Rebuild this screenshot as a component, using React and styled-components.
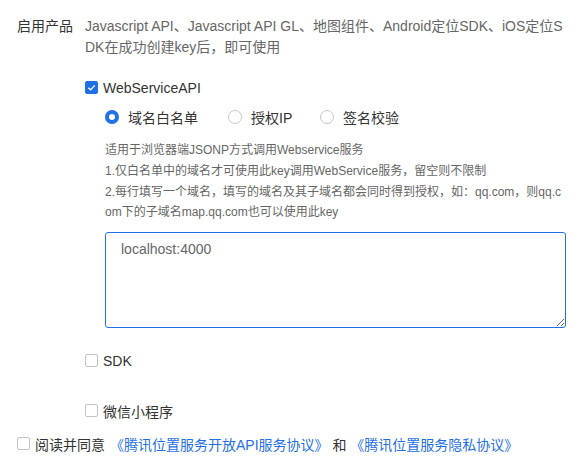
import React, { useState } from 'react'
import styled, { createGlobalStyle, css } from 'styled-components'

const BLUE = '#1f6fe5'

const GlobalStyle = createGlobalStyle`
  body {
    margin: 0;
    background: #fff;
    font-family: "Liberation Sans", "Noto Sans CJK SC", sans-serif;
    color: #333;
  }
`

const Page = styled.div`
  width: 587px;
  padding: 16px 0 0 17px;
  box-sizing: border-box;
`

const FormRow = styled.div`
  display: grid;
  grid-template-columns: 68px 482px;
`

const Label = styled.div`
  font-size: 14px;
  line-height: 21px;
  color: #333;
`

const Content = styled.div`
  display: flex;
  flex-direction: column;
`

const Desc = styled.p`
  margin: 0;
  font-size: 14px;
  line-height: 21px;
  color: #666;
  word-break: break-all;
`

const CheckRow = styled.label`
  display: flex;
  align-items: center;
  gap: 5px;
  height: 21px;
  font-size: 14px;
  color: #333;
  margin-top: ${p => p.$top || 0}px;
  cursor: pointer;
`

const Box = styled.span`
  width: 13px;
  height: 13px;
  box-sizing: border-box;
  border-radius: 2px;
  display: inline-flex;
  align-items: center;
  justify-content: center;
  flex-shrink: 0;
  ${p => p.$checked ? css`
    background: ${BLUE};
    border: 1px solid ${BLUE};
  ` : css`
    background: #fff;
    border: 1px solid #c4c4c4;
  `}
`

const Sub = styled.div`
  padding-left: 20px;
  display: flex;
  flex-direction: column;
`

const RadioGroup = styled.div`
  display: flex;
  align-items: center;
  height: 21px;
  margin-top: 8px;
`

const RadioItem = styled.label`
  display: flex;
  align-items: center;
  gap: 9px;
  font-size: 14px;
  color: #333;
  width: ${p => p.$w}px;
  cursor: pointer;
`

const RadioDot = styled.span`
  width: 14px;
  height: 14px;
  box-sizing: border-box;
  border-radius: 50%;
  flex-shrink: 0;
  background: #fff;
  border: ${p => p.$on ? `4px solid ${BLUE}` : '1px solid #c8c8c8'};
`

const Notes = styled.div`
  margin-top: 13px;
  width: 461px;
  font-size: 12px;
  line-height: 20px;
  color: #666;
  p {
    margin: 0 0 1px;
    word-break: break-all;
  }
`

const Area = styled.textarea`
  margin-top: 9px;
  width: 461px;
  height: 96px;
  box-sizing: border-box;
  border: 1px solid ${BLUE};
  border-radius: 3px;
  padding: 7px 15px;
  font-family: "Liberation Sans", "Noto Sans CJK SC", sans-serif;
  font-size: 14px;
  line-height: 18px;
  color: #666;
  resize: vertical;
  outline: none;
`

const Agree = styled.div`
  display: flex;
  align-items: center;
  gap: 5px;
  height: 21px;
  margin-top: 12px;
  font-size: 14px;
  color: #333;
`

const Link = styled.a`
  color: ${BLUE};
  text-decoration: none;
`

const Tick = () => (
  <svg width="9" height="9" viewBox="0 0 10 10">
    <path d="M1.5 5.2 L4 7.6 L8.6 2.6" fill="none" stroke="#fff" strokeWidth="1.5" />
  </svg>
)

const Check = ({ checked, children, top }) => (
  <CheckRow $top={top}>
    <Box $checked={checked}>{checked && <Tick />}</Box>
    {children}
  </CheckRow>
)

export default function App() {
  const [mode, setMode] = useState('domain')
  const radios = [
    { key: 'domain', text: '域名白名单', w: 123 },
    { key: 'ip', text: '授权IP', w: 92 },
    { key: 'sign', text: '签名校验', w: 90 },
  ]

  return (
    <Page>
      <GlobalStyle />
      <FormRow>
        <Label>启用产品</Label>
        <Content>
          <Desc>Javascript API、Javascript API GL、地图组件、Android定位SDK、iOS定位SDK在成功创建key后，即可使用</Desc>
          <Check checked top={19}>WebServiceAPI</Check>
          <Sub>
            <RadioGroup>
              {radios.map(r => (
                <RadioItem key={r.key} $w={r.w} onClick={() => setMode(r.key)}>
                  <RadioDot $on={mode === r.key} />
                  {r.text}
                </RadioItem>
              ))}
            </RadioGroup>
            <Notes>
              <p>适用于浏览器端JSONP方式调用Webservice服务</p>
              <p>1.仅白名单中的域名才可使用此key调用WebService服务，留空则不限制</p>
              <p>2.每行填写一个域名，填写的域名及其子域名都会同时得到授权，如：qq.com，则qq.com下的子域名map.qq.com也可以使用此key</p>
            </Notes>
            <Area defaultValue="localhost:4000" />
          </Sub>
          <Check top={22}>SDK</Check>
          <Check top={29}>微信小程序</Check>
        </Content>
      </FormRow>
      <Agree>
        <Box />
        <span>阅读并同意</span>
        <span>
          <Link href="#">《腾讯位置服务开放API服务协议》</Link> 和 <Link href="#">《腾讯位置服务隐私协议》</Link>
        </span>
      </Agree>
    </Page>
  )
}
